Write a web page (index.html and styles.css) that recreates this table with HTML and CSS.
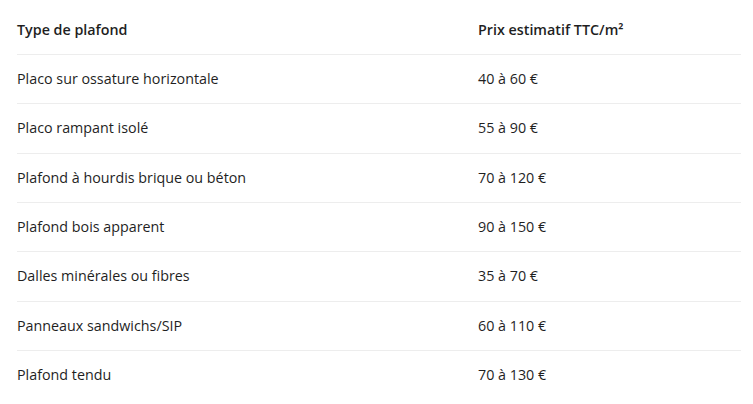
FILE: index.html
```html
<!DOCTYPE html>
<html lang="fr">
<head>
<meta charset="utf-8">
<link rel="stylesheet" href="styles.css">
</head>
<body>
<table class="prices">
  <thead>
    <tr><th class="col-type">Type de plafond</th><th>Prix estimatif TTC/m²</th></tr>
  </thead>
  <tbody>
    <tr><td>Placo sur ossature horizontale</td><td>40 à 60 €</td></tr>
    <tr><td>Placo rampant isolé</td><td>55 à 90 €</td></tr>
    <tr><td>Plafond à hourdis brique ou béton</td><td>70 à 120 €</td></tr>
    <tr><td>Plafond bois apparent</td><td>90 à 150 €</td></tr>
    <tr><td>Dalles minérales ou fibres</td><td>35 à 70 €</td></tr>
    <tr><td>Panneaux sandwichs/SIP</td><td>60 à 110 €</td></tr>
    <tr><td>Plafond tendu</td><td>70 à 130 €</td></tr>
  </tbody>
</table>
</body>
</html>
```

FILE: styles.css
```css
html, body {
  margin: 0;
  padding: 0;
  background: #ffffff;
}
body {
  font-family: "Open Sans", "Noto Sans", sans-serif;
  font-size: 14.3px;
  color: #1f1f1f;
}
.prices {
  margin: 6px 0 0 17px;
  width: 724px;
  border-collapse: collapse;
  table-layout: fixed;
}
.prices th, .prices td {
  padding: 0;
  text-align: left;
  vertical-align: middle;
  line-height: 20px;
}
.prices th {
  font-weight: 600;
  height: 48px;
}
.prices .col-type {
  width: 461px;
}
.prices td {
  height: 48.33px;
}
.prices tr {
  border-bottom: 1px solid #ededed;
}
.prices tbody tr:last-child {
  border-bottom: none;
}
```
